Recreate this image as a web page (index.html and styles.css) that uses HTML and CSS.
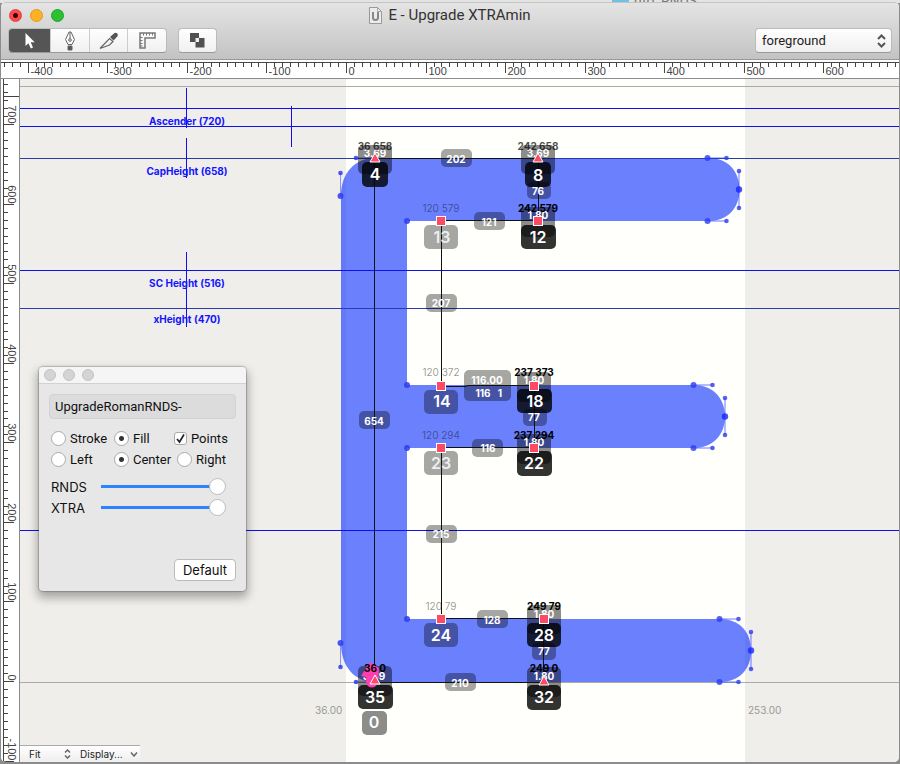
FILE: index.html
```html
<!DOCTYPE html>
<html lang="en">
<head>
<meta charset="utf-8">
<title>E - Upgrade XTRAmin</title>
<link rel="stylesheet" href="styles.css">
</head>
<body>
<div class="backdrop"><span class="folder"></span><span>ufo_RNDS</span></div>
<main class="window">
  <header class="header">
    <div class="titlebar">
      <div class="lights">
        <button class="light close" aria-label="Close"></button>
        <button class="light minimize" aria-label="Minimize"></button>
        <button class="light zoom" aria-label="Zoom"></button>
      </div>
      <h1 class="title">
        <svg width="13" height="17" viewBox="0 0 13 17" aria-hidden="true"><path d="M.5.5h8l4 4v12H.5z" fill="#ececec" stroke="#999"/><path d="M8.5.5v4h4" fill="none" stroke="#aaa"/><path d="M4 5v5.500a2.500 2.500 0 0 0 5 0V5" fill="none" stroke="#888" stroke-width="2"/></svg>
        E - Upgrade XTRAmin
      </h1>
    </div>
    <div class="toolbar">
      <div class="segments">
        <button class="tool active" aria-label="Edit">
          <svg width="12" height="16" viewBox="0 0 12 16"><path d="M1.500 0v13l3-2.800 2.300 5.300 2.200-1-2.300-5.200h4z" fill="#fff"/></svg>
        </button>
        <button class="tool" aria-label="Bezier">
          <svg width="12" height="20" viewBox="0 0 12 20" fill="none" stroke="#666"><path d="M5 1L1.500 8.500 4 13.500h4l2.500-5L7 1z"/><path d="M6 1v7"/><circle cx="6" cy="9" r="1.300"/><path d="M4 15h4v4H4z" fill="#555"/></svg>
        </button>
        <button class="tool" aria-label="Slice">
          <svg width="20" height="18" viewBox="0 0 20 18"><path d="M1 16.500L10.500 6.500l3.500 3L10.500 13z" fill="none" stroke="#666" stroke-width="1.200"/><path d="M11 5l4.500-4q1.500-.8 2.800.5 1 1.300.2 2.700L14.500 8.500z" fill="#555"/></svg>
        </button>
        <button class="tool" aria-label="Measure">
          <svg width="17" height="17" viewBox="0 0 17 17" fill="none" stroke="#777"><path d="M1 1h15v5H6v10H1z" stroke-width="1.500"/><path d="M4.500 1v2.500M7.500 1v2.500M10.500 1v2.500M13.500 1v2.500M1 5.500h2.500M1 8.500h2.500M1 11.500h2.500M1 14h2.500"/></svg>
        </button>
      </div>
      <button class="overlap" aria-label="Remove overlap">
        <svg width="15" height="15" viewBox="0 0 15 15"><path d="M0 0h9v5h5.500v9.500h-9V9H0z" fill="#505050"/><path d="M5.500 5H9v4H5.500z" fill="#eee"/></svg>
      </button>
      <label class="layer">
        <select aria-label="Layer"><option>foreground</option></select>
        <svg width="9" height="14" viewBox="0 0 9 14" fill="none" stroke="#555" stroke-width="2"><path d="M1 5l3.500-3.500L8 5M1 9l3.500 3.500L8 9"/></svg>
      </label>
    </div>
  </header>
  <svg class="ruler-x" id="ruler-x"></svg>
  <section class="workspace">
    <svg class="ruler-y" id="ruler-y"></svg>
    <div class="stage">
      <svg class="glyph" role="img" aria-label="Glyph E">
        <defs>
          <g id="sq"><rect x="-4.500" y="-4.500" width="9" height="9" fill="#ff4a66" stroke="#fff"/></g>
          <g id="tri"><path d="M0-5L5 4H-5z" fill="#ff4a66" stroke="#fff"/></g>
          <g id="cap">
            <path d="M-31.500 0h19M0 13v37M-31.500 63h19" fill="none" stroke="#2838ff" stroke-opacity=".45" stroke-width="1.500"/>
            <g fill="#2b3cf0" fill-opacity=".8"><circle cx="-31.500" r="3"/><circle cx="-31.500" cy="63" r="3"/><circle cy="31.500" r="3.200" fill="#1525ff"/><circle cx="-12.500" r="2.300"/><circle cx="-12.500" cy="63" r="2.300"/><circle cy="13" r="2.300"/><circle cy="50" r="2.300"/></g>
          </g>
        </defs>
        <g transform="translate(-20 -79)">
          <rect class="page" x="346" y="79" width="399" height="100%"/>
          <path class="shape" d="M375 158H708C728 158 739.500 171 739.500 189.500S728 221 708 221H407V385H693C713 385 725 398 725 416.500S713 448 693 448H407V619H719C740 619 751 632 751 650.500S740 682 719 682H375C355 682 341 667 341 643V196C341 173 355 158 375 158z"/>

          <path class="rule-gray" d="M20 86.500H2000M20 682.500H2000"/>
          <path class="guide-dark" d="M20 158.500H2000M20 308.500H2000"/>
          <path class="guide" d="M20 108.500H2000M20 126.500H2000M20 270.500H2000M20 530.500H2000M186.500 88V128M291.500 106V147M186.500 138V178M186.500 252V327"/>
          <g class="guide-name">
            <text x="187" y="125">Ascender (720)</text>
            <text x="187" y="175">CapHeight (658)</text>
            <text x="187" y="287">SC Height (516)</text>
            <text x="187" y="323">xHeight (470)</text>
          </g>

          <use href="#cap" x="739" y="158"/>
          <use href="#cap" x="725" y="385"/>
          <use href="#cap" x="751" y="619"/>
          <path class="handle" d="M340.500 173V196M340.500 643V667M356 158H375M356 682H375"/>
          <g class="node"><circle cx="340.500" cy="196" r="3"/><circle cx="340.500" cy="643" r="3"/><circle cx="340.500" cy="173" r="2.300"/><circle cx="340.500" cy="667" r="2.300"/><circle cx="356" cy="158" r="2.300"/><circle cx="356" cy="682" r="2.300"/><circle cx="407" cy="221" r="3"/><circle cx="407" cy="385" r="3"/><circle cx="407" cy="448" r="3"/><circle cx="407" cy="619" r="3"/></g>

          <g class="soft">
            <rect x="441" y="149" width="31" height="18" rx="5"/><rect x="474" y="212" width="31" height="18" rx="5"/>
            <rect x="426" y="294" width="31" height="18" rx="5"/><rect x="464" y="370" width="47" height="31" rx="5"/>
            <rect x="359" y="411" width="31" height="18" rx="5"/><rect x="472" y="439" width="31" height="18" rx="5"/>
            <rect x="426" y="525" width="31" height="18" rx="5"/><rect x="477" y="610" width="31" height="18" rx="5"/>
            <rect x="445" y="673" width="31" height="18" rx="5"/>
            <rect x="527" y="182" width="24" height="17" rx="5"/><rect x="523" y="409" width="24" height="17" rx="5"/><rect x="532" y="643" width="24" height="17" rx="5"/>
            <rect x="424" y="225" width="34" height="24" rx="5"/><rect x="424" y="390" width="34" height="24" rx="5"/>
            <rect x="424" y="451" width="34" height="24" rx="5"/><rect x="424" y="623" width="34" height="24" rx="5"/>
          </g>
          <g class="mid">
            <rect x="358" y="145" width="34" height="29" rx="5"/><rect x="521" y="145" width="34" height="29" rx="5"/>
            <rect x="521" y="207" width="34" height="30" rx="5"/><rect x="517" y="372" width="34" height="30" rx="5"/>
            <rect x="517" y="434" width="34" height="30" rx="5"/><rect x="527" y="605" width="34" height="29" rx="5"/>
            <rect x="358" y="666" width="34" height="30" rx="5"/><rect x="527" y="667" width="34" height="30" rx="5"/>
            <rect x="362" y="711" width="25" height="24" rx="5"/>
          </g>
          <path class="measure" d="M375 158.500H538M375 682.500H544M374.500 158V682M441 220.500H538M441.500 221V385M441 386.500H466L468 385.500H534M441.500 448V619M441 447.500H534M441 618.500H544M538.500 158V221M534.500 385V448M543.500 619V682"/>
          <g class="strong">
            <rect x="362" y="162" width="26" height="25" rx="5"/><rect x="525" y="162" width="26" height="25" rx="5"/>
            <rect x="521" y="225" width="35" height="24" rx="5"/><rect x="517" y="389" width="35" height="24" rx="5"/>
            <rect x="517" y="451" width="35" height="25" rx="5"/><rect x="527" y="623" width="34" height="24" rx="5"/>
            <rect x="358" y="685" width="35" height="24" rx="5"/><rect x="527" y="685" width="34" height="25" rx="5"/>
          </g>
          <g class="length">
            <text x="456" y="163">202</text><text x="489" y="226">121</text><text x="441" y="307">207</text>
            <text x="487" y="384">116.00</text><text x="483" y="397">116</text><text x="500" y="397">1</text>
            <text x="374" y="425">654</text><text x="488" y="452">116</text><text x="441" y="538">215</text>
            <text x="492" y="624">128</text><text x="460" y="687">210</text>
            <text x="538" y="195">76</text><text x="534" y="421">77</text><text x="544" y="655">77</text>
            <text x="375" y="157">3.69</text><text x="538" y="157">3.69</text><text x="538" y="219">1.80</text>
            <text x="534" y="384">1.80</text><text x="534" y="446">1.80</text><text x="544" y="618">1.80</text>
            <text x="374" y="680">3.69</text><text x="544" y="680">1.80</text>
          </g>
          <g class="index">
            <text x="375" y="180">4</text><text x="538" y="181">8</text><text x="538" y="243">12</text>
            <text x="535" y="407">18</text><text x="534" y="469">22</text><text x="544" y="641">28</text>
            <text x="375" y="703">35</text><text x="544" y="703">32</text><text x="374" y="728">0</text>
            <text class="pale" x="442" y="243">13</text><text x="442" y="407">14</text>
            <text class="pale" x="441" y="469">23</text><text x="441" y="641">24</text>
          </g>
          <g class="coord">
            <text x="441" y="212">120 579</text><text x="441" y="376">120 372</text>
            <text x="441" y="439">120 294</text><text x="441" y="610">120 79</text>
          </g>
          <g class="coord-strong">
            <text class="worn" x="375" y="150">36 658</text>
            <text class="worn" x="538" y="150">242 658</text>
            <text x="538" y="212">242 579</text><text x="534" y="376">237 373</text><text x="534" y="439">237 294</text>
            <text x="544" y="610">249 79</text><text x="544" y="672">249 0</text>
          </g>
          <path class="start" d="M370 662l9 6-1 14a6 6 0 0 1-12-1v-4l-5-1z"/>
          <text class="origin" x="375" y="672">36 0</text>
          <use href="#tri" x="375" y="158"/><use href="#tri" x="538" y="158"/>
          <use href="#tri" x="375" y="680"/><use href="#tri" x="544" y="681"/>
          <use href="#sq" x="441" y="221"/><use href="#sq" x="538" y="221"/>
          <use href="#sq" x="441" y="386"/><use href="#sq" x="534" y="386"/>
          <use href="#sq" x="441" y="448"/><use href="#sq" x="534" y="448"/>
          <use href="#sq" x="441" y="619"/><use href="#sq" x="544" y="619"/>
          <text class="bearing" x="315" y="714">36.00</text>
          <text class="bearing" x="748" y="714">253.00</text>
        </g>
      </svg>

      <form class="panel">
        <div class="panel-bar"><i></i><i></i><i></i></div>
        <div class="panel-body">
          <input class="name" type="text" aria-label="Name" value="UpgradeRomanRNDS-">
          <div class="row first">
            <label><input type="radio" name="mode">Stroke</label>
            <label><input type="radio" name="mode" checked>Fill</label>
            <label><input type="checkbox" checked>Points</label>
          </div>
          <div class="row">
            <label><input type="radio" name="align">Left</label>
            <label><input type="radio" name="align" checked>Center</label>
            <label><input type="radio" name="align">Right</label>
          </div>
          <div class="sliders">
            <label for="rnds">RNDS</label><input id="rnds" type="range" value="100">
            <label for="xtra">XTRA</label><input id="xtra" type="range" value="100">
          </div>
          <button class="default" type="button">Default</button>
        </div>
      </form>

      <div class="status">
        <label class="fit"><select aria-label="Zoom level"><option>Fit</option></select>
          <svg width="7" height="10" viewBox="0 0 7 10" fill="none" stroke="#666" stroke-width="1.500"><path d="M1 3.500L3.500 1 6 3.500M1 6.500L3.500 9 6 6.500"/></svg></label>
        <button type="button" class="display">Display...
          <svg width="8" height="5" viewBox="0 0 8 5" fill="none" stroke="#666" stroke-width="1.500"><path d="M1 .5L4 4 7 .5"/></svg></button>
      </div>
    </div>
  </section>
</main>
<script src="rulers.js"></script>
</body>
</html>
```

FILE: styles.css
```css
* { box-sizing: border-box; }
body {
  margin: 0;
  height: 100vh;
  display: flex;
  flex-direction: column;
  padding: 0 1px 2px;
  background: #8c8c8c;
  font-family: Inter, "Liberation Sans", sans-serif;
  color: #222;
  overflow: hidden;
}
button, input, select { font: inherit; color: inherit; margin: 0; }

.backdrop {
  flex: none;
  height: 3px;
  margin: 0 -1px -1px;
  padding-left: 612px;
  display: flex;
  align-items: flex-end;
  gap: 5px;
  background: #e4e4e4;
  color: #777;
  font: 14px/4px Roboto, sans-serif;
  overflow: hidden;
}
.folder { width: 17px; height: 3px; background: #71bfe4; }

.window {
  flex: 1;
  min-height: 0;
  display: flex;
  flex-direction: column;
  border-radius: 5px;
  overflow: hidden;
  background: #fff;
}
.header {
  flex: none;
  height: 58px;
  background: linear-gradient(#e4e4e4, #c3c3c3);
  border-top: 1px solid #c4c4c4;
  border-bottom: 1px solid #999;
}
.titlebar {
  height: 24px;
  padding: 0 8px;
  display: grid;
  grid-template-columns: 1fr auto 1fr;
  align-items: center;
}
.lights { display: flex; gap: 8px; }
.light {
  width: 13px;
  height: 13px;
  padding: 0;
  border: 1px solid #df3f40;
  border-radius: 50%;
  background: #fc4b4b;
}
.close { background: radial-gradient(#400 0 2px, #fc4b4b 3px); }
.minimize { background: #fdb124; border-color: #e09b1a; }
.zoom { background: #2bc132; border-color: #20a528; }
.title {
  margin: 0;
  display: flex;
  align-items: center;
  gap: 6px;
  font: 400 15px/20px Roboto, sans-serif;
  color: #333;
}

.toolbar { display: flex; gap: 11px; padding: 1px 7px; }
.segments, .overlap, .layer {
  height: 25px;
  border: 1px solid #bbb;
  border-bottom-color: #999;
  border-radius: 4px;
  background: linear-gradient(#fefefe, #f0f0f0);
}
.segments { display: flex; overflow: hidden; width: 159px; }
.tool {
  flex: 1;
  display: grid;
  place-items: center;
  padding: 0;
  border: 0;
  border-left: 1px solid #ccc;
  background: none;
}
.tool.active { flex: none; width: 41px; border: 0; background: #555; }
.overlap { width: 39px; padding: 0; display: grid; place-items: center; }
.layer { width: 137px; margin-left: auto; display: flex; align-items: center; padding-right: 5px; }
.layer select {
  flex: 1;
  min-width: 0;
  height: 23px;
  padding: 0 6px;
  border: 0;
  appearance: none;
  background: none;
  font: 13px Roboto, sans-serif;
}

.ruler-x { flex: none; width: 100%; height: 19px; border-bottom: 1px solid #8c8c8c; background: #fff; }
.ruler-y { flex: none; width: 19px; height: 100%; border-right: 1px solid #8c8c8c; background: #fff; }
.ruler-x path, .ruler-y path { stroke: #444; fill: none; }
.ruler-x text, .ruler-y text { font: 11px "Liberation Sans", sans-serif; fill: #444; }

.workspace { flex: 1; min-height: 0; display: flex; }
.stage { flex: 1; min-width: 0; position: relative; background: #efeeeb; }
.glyph { display: block; width: 100%; height: 100%; }
.page { fill: #fffffb; }
.shape { fill: rgba(0, 36, 255, .58); }
.rule-gray { stroke: #aaa; }
.guide { stroke: #1010ee; fill: none; }
.guide-dark { stroke: #2b3bb0; }
.guide-name { font-size: 10px; font-weight: 700; fill: #1414ff; text-anchor: middle; }
.handle { stroke: #2838ff; stroke-opacity: .5; fill: none; }
.node { fill: #2b3cf0; fill-opacity: .85; }
.soft { fill: rgba(0, 0, 0, .35); }
.mid { fill: rgba(0, 0, 0, .45); }
.strong { fill: rgba(0, 0, 0, .8); }
.measure { stroke: #111; fill: none; }
.length { font-size: 10px; font-weight: 700; fill: #fff; text-anchor: middle; }
.index { font-size: 16px; font-weight: 600; fill: #fff; text-anchor: middle; }
.pale { fill: #eee; }
.coord { font-size: 10px; fill: rgba(0, 0, 0, .42); text-anchor: middle; }
.coord-strong, .origin { font-size: 10px; font-weight: 700; fill: #000; text-anchor: middle; }
.worn { fill: rgba(0, 0, 0, .7); }
.start { fill: #ff3fae; }
.bearing { font-size: 10px; fill: #999; }

.panel {
  position: absolute;
  left: 19px;
  top: 288px;
  width: 207px;
  border-radius: 4px;
  background: #e7e7e7;
  box-shadow: 0 0 1px 1px rgba(0, 0, 0, .2), 0 5px 10px 2px rgba(0, 0, 0, .3);
  overflow: hidden;
  color: #111;
}
.panel-bar { display: flex; align-items: center; gap: 7px; height: 17px; padding: 0 5px; background: #f5f5f5; border-bottom: 1px solid #d2d2d2; }
.panel-bar i { width: 12px; height: 12px; border-radius: 50%; background: #d4d4d4; border: 1px solid #c2c2c2; }
.panel-body { padding: 10px; height: 207px; display: flex; flex-direction: column; }
.name {
  width: 187px;
  height: 25px;
  padding: 0 5px;
  border: 1px solid #d2d2d2;
  border-radius: 4px;
  background: #dcdcdc;
  font: 13px Roboto, sans-serif;
}
.row { display: grid; grid-template-columns: 63px 63px 1fr; height: 21px; padding-left: 2px; }
.row.first { grid-template-columns: 63px 60px 1fr; margin-top: 9px; }
.row label { display: flex; align-items: center; gap: 4px; font: 13px/20px Roboto, sans-serif; }
.row input { flex: none; appearance: none; width: 15px; height: 15px; border: 1px solid #aaa; border-radius: 50%; background: #fff; }
.row input[type="radio"]:checked { background: radial-gradient(#333 0 2px, #fff 3px); }
.row input[type="checkbox"] {
  width: 13px;
  height: 13px;
  border-radius: 3px;
  background: url("data:image/svg+xml,%3Csvg xmlns='http://www.w3.org/2000/svg' viewBox='0 0 11 11'%3E%3Cpath d='M2 6l2.500 3L9 1.500' fill='none' stroke='%23222' stroke-width='1.700'/%3E%3C/svg%3E") #fff;
}
.sliders { display: grid; grid-template-columns: 50px 125px; grid-auto-rows: 21px; align-items: center; margin: 6px 0 0 2px; font-size: 13px; }
.sliders input { appearance: none; width: 125px; height: 17px; background: linear-gradient(#2f82fb, #2f82fb) 0 7px / 115px 3px no-repeat; }
.sliders input::-webkit-slider-thumb { appearance: none; width: 17px; height: 17px; border: 1px solid #bbb; border-radius: 50%; background: #fff; }
.default { margin-top: auto; align-self: flex-end; width: 62px; height: 22px; padding: 0; border: 1px solid #bbb; border-radius: 4px; background: #fff; font-size: 13px; }

.status {
  position: absolute;
  left: 0;
  bottom: 0;
  display: flex;
  align-items: center;
  width: 120px;
  height: 17px;
  border-top: 1px solid #aaa;
  background: linear-gradient(#fff, #eee);
  font-size: 10px;
}
.fit { display: flex; align-items: center; width: 51px; }
.fit select { flex: 1; min-width: 0; height: 14px; padding: 0 0 0 9px; border: 0; background: none; appearance: none; }
.display { display: flex; align-items: center; justify-content: space-between; width: 69px; padding: 0 2px 0 9px; border: 0; background: none; }
```

FILE: rulers.js
```js
// Both rulers share one scale: pixels per font unit.
const SCALE = 0.7955;
const NS = "http://www.w3.org/2000/svg";

function add(svg, name, attrs, text) {
  const el = document.createElementNS(NS, name);
  for (const key in attrs) el.setAttribute(key, attrs[key]);
  if (text) el.textContent = text;
  svg.appendChild(el);
}

function draw() {
  const rx = document.getElementById("ruler-x");
  const ry = document.getElementById("ruler-y");
  const width = rx.clientWidth;
  const height = ry.clientHeight;
  rx.replaceChildren();
  ry.replaceChildren();

  let d = `M0 2.5H${width}`;
  for (let u = -430; 345 + u * SCALE < width; u += 10) {
    const x = Math.round(345 + u * SCALE) + 0.5;
    d += `M${x} 2V${u % 100 ? 7 : 13}`;
    if (u % 100 === 0) add(rx, "text", { x: x + 2, y: 15 }, String(u));
  }
  add(rx, "path", { d });

  d = `M2.5 0V${height}M3 17.5H18`;
  for (let u = 750; 602 - u * SCALE < height; u -= 10) {
    const y = Math.round(602 - u * SCALE) + 0.5;
    d += `M3 ${y}H${u % 100 ? 7 : 13}`;
    if (u % 100 === 0) add(ry, "text", { transform: `translate(7 ${y - 1}) rotate(90)`, "text-anchor": "end" }, String(u));
  }
  add(ry, "path", { d });
}

draw();
addEventListener("resize", draw);
```
